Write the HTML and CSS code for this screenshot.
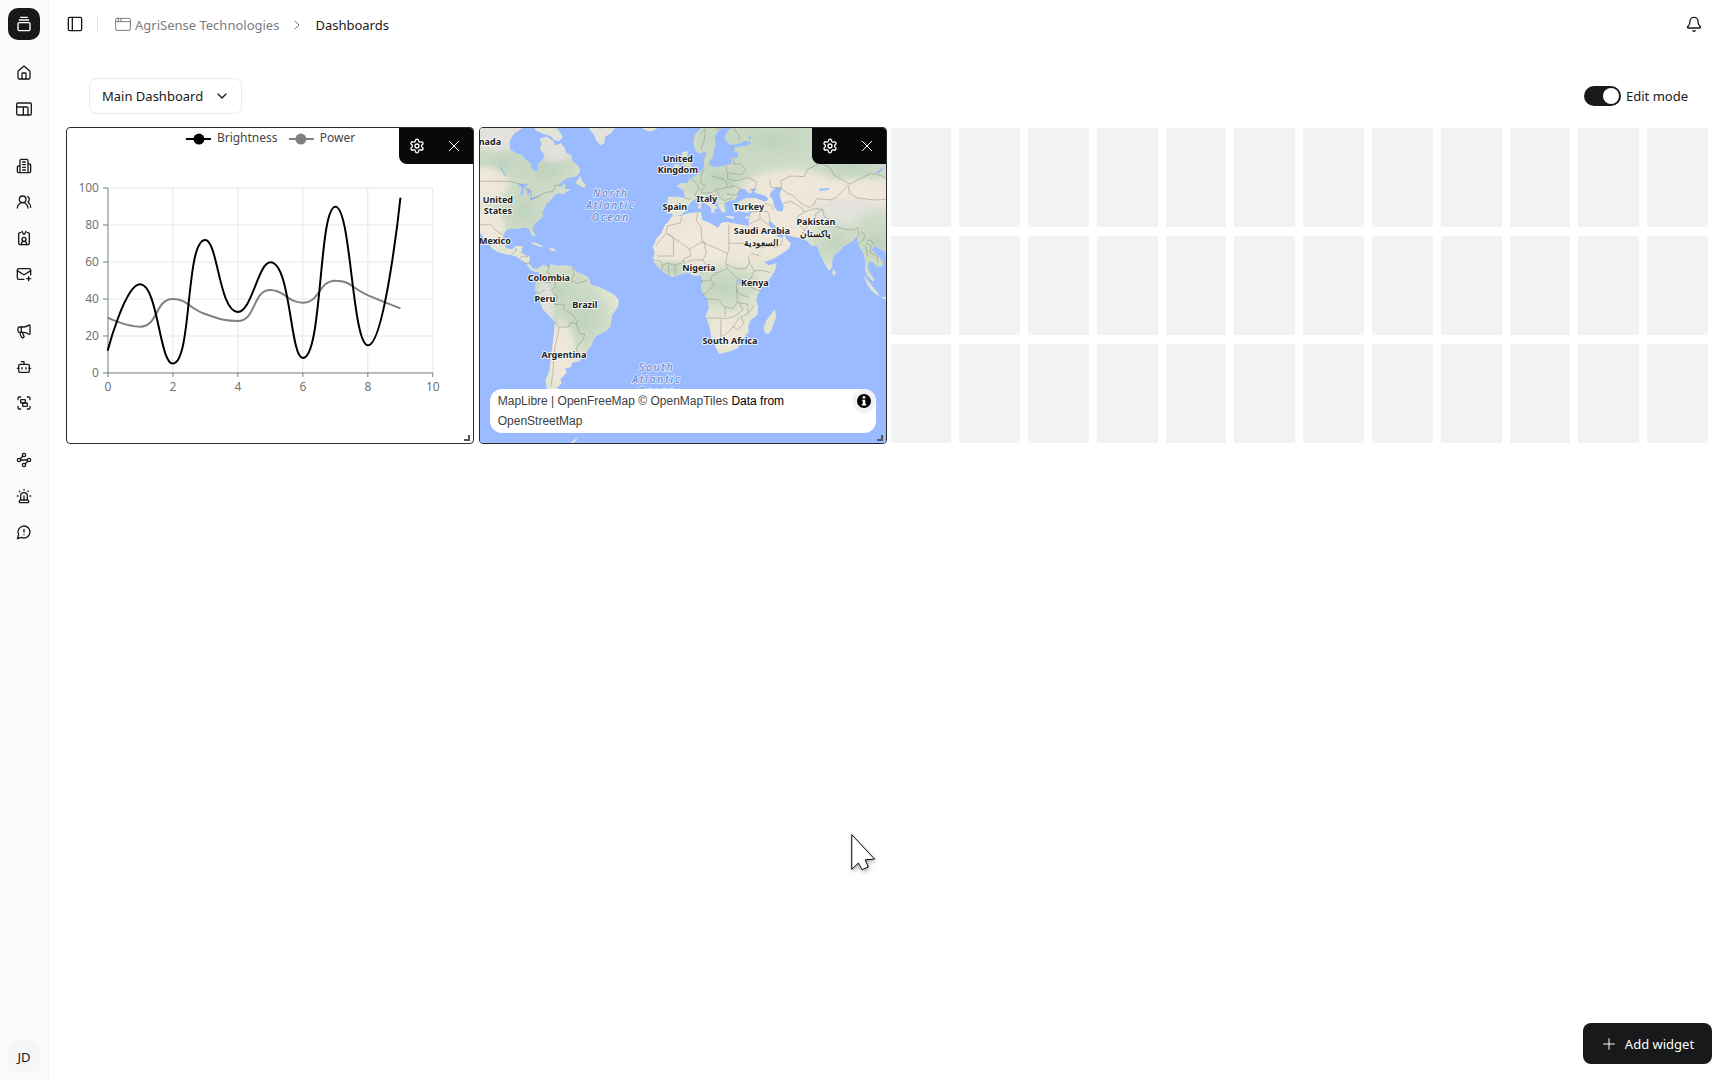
FILE: index.html
```html
<!DOCTYPE html>
<html lang="en">
<head>
<meta charset="utf-8">
<meta name="viewport" content="width=device-width, initial-scale=1">
<title>Dashboards - AgriSense Technologies</title>
<link rel="stylesheet" href="styles.css">
</head>
<body>
<div class="app">
  <aside class="sidebar">
    <a class="logo" href="#" aria-label="Workspace">
      <svg class="icon" viewBox="0 0 24 24"><path d="M7 2h10M5 6h14"/><rect x="3" y="10" width="18" height="12" rx="2"/></svg>
    </a>
    <nav class="nav" aria-label="Main">
      <div class="nav-group">
        <a class="nav-item" href="#" aria-label="Home"><svg class="icon" viewBox="0 0 24 24"><path d="M15 21v-8a1 1 0 0 0-1-1h-4a1 1 0 0 0-1 1v8"/><path d="M3 10a2 2 0 0 1 .7-1.5l7-6a2 2 0 0 1 2.6 0l7 6A2 2 0 0 1 21 10v9a2 2 0 0 1-2 2H5a2 2 0 0 1-2-2z"/></svg></a>
        <a class="nav-item" href="#" aria-label="Dashboards"><svg class="icon" viewBox="0 0 24 24"><rect x="1" y="3" width="22" height="18" rx="2"/><path d="M1 9h15a2 2 0 0 1 2 2v10M11 9v12"/></svg></a>
      </div>
      <div class="nav-group">
        <a class="nav-item" href="#" aria-label="Organizations"><svg class="icon" viewBox="0 0 24 24"><path d="M6 22V4a2 2 0 0 1 2-2h8a2 2 0 0 1 2 2v18zM6 12H4a2 2 0 0 0-2 2v6a2 2 0 0 0 2 2h2M18 9h2a2 2 0 0 1 2 2v9a2 2 0 0 1-2 2h-2M10 6h4M10 10h4M10 14h4M10 18h4"/></svg></a>
        <a class="nav-item" href="#" aria-label="Users"><svg class="icon" viewBox="0 0 24 24"><path d="M18 21a8 8 0 0 0-16 0"/><circle cx="10" cy="8" r="5"/><path d="M22 20c0-3.4-2-6.500-4-8a5 5 0 0 0-.45-8.300"/></svg></a>
        <a class="nav-item" href="#" aria-label="Badges"><svg class="icon" viewBox="0 0 24 24"><path d="M15 2l-2 4h-2L9 2M16 22v-1a4 4 0 0 0-8 0v1"/><circle cx="12" cy="14" r="3"/><path d="M7 4H6a2 2 0 0 0-2 2v14a2 2 0 0 0 2 2h12a2 2 0 0 0 2-2V6a2 2 0 0 0-2-2h-1"/></svg></a>
        <a class="nav-item" href="#" aria-label="Invitations"><svg class="icon" viewBox="0 0 24 24"><path d="M22 13V6a2 2 0 0 0-2-2H4a2 2 0 0 0-2 2v12a2 2 0 0 0 2 2h8"/><path d="m22 7-9 5.700a2 2 0 0 1-2 0L2 7M19 16v6M16 19h6"/></svg></a>
      </div>
      <div class="nav-group">
        <a class="nav-item" href="#" aria-label="Announcements"><svg class="icon" viewBox="0 0 24 24"><path d="M11 6a13 13 0 0 0 8.400-2.800A1 1 0 0 1 21 4v12a1 1 0 0 1-1.600.8A13 13 0 0 0 11 14H5a2 2 0 0 1-2-2V8a2 2 0 0 1 2-2z"/><path d="M6 14a12 12 0 0 0 2.400 7.200 2 2 0 0 0 3.200-2.400A8 8 0 0 1 10 14M8 6v8"/></svg></a>
        <a class="nav-item" href="#" aria-label="Bots"><svg class="icon" viewBox="0 0 24 24"><path d="M12 8V4H8"/><rect x="4" y="8" width="16" height="12" rx="2"/><path d="M2 14h2M20 14h2M15 13v2M9 13v2"/></svg></a>
        <a class="nav-item" href="#" aria-label="Groups"><svg class="icon" viewBox="0 0 24 24"><path d="M3 7V5a2 2 0 0 1 2-2h2M17 3h2a2 2 0 0 1 2 2v2M21 17v2a2 2 0 0 1-2 2h-2M7 21H5a2 2 0 0 1-2-2v-2"/><rect x="7" y="7" width="7" height="5" rx="1"/><rect x="10" y="12" width="7" height="5" rx="1"/></svg></a>
      </div>
      <div class="nav-group">
        <a class="nav-item" href="#" aria-label="Workflows"><svg class="icon" viewBox="0 0 24 24"><circle cx="12" cy="4.500" r="2.500"/><path d="m10.200 6.300-3.900 3.900"/><circle cx="4.500" cy="12" r="2.500"/><path d="M7 12h10"/><circle cx="19.500" cy="12" r="2.500"/><path d="m13.800 17.700 3.900-3.900"/><circle cx="12" cy="19.500" r="2.500"/></svg></a>
        <a class="nav-item" href="#" aria-label="Alarms"><svg class="icon" viewBox="0 0 24 24"><path d="M7 18v-6a5 5 0 1 1 10 0v6M5 21a1 1 0 0 0 1 1h12a1 1 0 0 0 1-1v-1a2 2 0 0 0-2-2H7a2 2 0 0 0-2 2zM21 12h1M18.500 4.500 18 5M2 12h1M12 2v1M4.900 4.900l.7.7M12 12v6"/></svg></a>
        <a class="nav-item" href="#" aria-label="Feedback"><svg class="icon" viewBox="0 0 24 24"><path d="M7.900 20A9 9 0 1 0 4 16.100L2 22zM12 8v4M12 16h.01"/></svg></a>
      </div>
    </nav>
    <button class="avatar" type="button" aria-label="Account">JD</button>
  </aside>

  <div class="page">
    <header class="topbar">
      <button class="icon-button" type="button" aria-label="Toggle sidebar"><svg class="icon" viewBox="0 0 24 24"><rect x="2" y="2" width="20" height="20" rx="2"/><path d="M8 2v20"/></svg></button>
      <span class="divider"></span>
      <nav class="crumbs" aria-label="Breadcrumb">
        <a class="crumb" href="#"><svg class="icon icon-thin" viewBox="0 0 24 24"><rect x="1" y="2" width="22" height="18" rx="2"/><path d="M1 7h22M5 2v5M9 2v5"/></svg>AgriSense Technologies</a>
        <svg class="icon icon-small crumb-arrow" viewBox="0 0 24 24"><path d="m8 4 8 8-8 8"/></svg>
        <span class="crumb-current">Dashboards</span>
      </nav>
      <button class="icon-button push" type="button" aria-label="Notifications"><svg class="icon" viewBox="0 0 24 24"><path d="M10.300 22a2 2 0 0 0 3.400 0M3.300 15.300A1 1 0 0 0 4 18h16a1 1 0 0 0 .7-2.700C19.400 14 18 12.500 18 8A6 6 0 0 0 6 8c0 4.500-1.400 6-2.700 7.300"/></svg></button>
    </header>

    <main class="content">
      <div class="toolbar">
        <div class="picker">
          <select class="picker-select" aria-label="Dashboard"><option>Main Dashboard</option></select>
          <svg class="icon picker-arrow" viewBox="0 0 24 24"><path d="m6 9 6 6 6-6"/></svg>
        </div>
        <label class="switch"><input class="switch-input" type="checkbox" role="switch" checked>Edit mode</label>
      </div>

      <div class="board" id="board">
        <section class="widget widget-chart" aria-label="Brightness and power">
          <svg class="fill" viewBox="1 1 406 315">
            <g class="grid-lines"><path d="M107 61v185M172 61v185M237 61v185M302 61v185M367 61v185M42 61h325M42 98h325M42 135h325M42 172h325M42 209h325"/></g>
            <g class="axis"><path d="M42 61v189M37 246h330M37 61h5M37 98h5M37 135h5M37 172h5M37 209h5M107 246v4M172 246v4M237 246v4M302 246v4M367 246v4"/></g>
            <g class="axis-text end"><text x="33" y="65">100</text><text x="33" y="102">80</text><text x="33" y="139">60</text><text x="33" y="176">40</text><text x="33" y="213">20</text><text x="33" y="250">0</text></g>
            <g class="axis-text middle"><text x="42" y="264">0</text><text x="107" y="264">2</text><text x="172" y="264">4</text><text x="237" y="264">6</text><text x="302" y="264">8</text><text x="367" y="264">10</text></g>
            <g class="series" transform="translate(-6 -7) scale(.33333)">
              <path class="power" d="M143 593C143 593 197.600 620 240.700 620C295.300 620 285.300 537 338.400 537C383 537 385.400 564.900 436 582C483 598 492 603 533.800 603C590 603 576.500 510 631.500 510C674 510 683 548 729 548C781 548 775.700 482 827 482C873.400 482 875.300 505 924.600 526C973 546.500 1022 565 1022 565"/>
              <path class="brightness" d="M143 692C143 692 195.500 493 240.700 493C293.200 493 299.200 731 338.400 731C397 731 375.700 360 436 360C473.400 360 478 576 533.800 576C575.700 576 595.300 427 631.500 427C693 427 690.600 714 729 714C788.300 714 776 260 827 260C873.700 260 877 676 924.600 676C975 676 1022 233 1022 233"/>
            </g>
            <g class="legend">
              <path class="brightness" d="M120 12h25"/><circle cx="133" cy="12" r="5.500"/><text x="151" y="15">Brightness</text>
              <path class="power" d="M223 12h25"/><circle class="power-dot" cx="235" cy="12" r="5.500"/><text x="254" y="15">Power</text>
            </g>
          </svg>
          <div class="widget-tools">
            <button class="tool" type="button" aria-label="Configure chart"><svg class="icon" viewBox="0 0 24 24"><use href="#gear"/></svg></button>
            <button class="tool" type="button" aria-label="Remove chart"><svg class="icon icon-thin" viewBox="0 0 24 24"><path d="M19 5 5 19M5 5l14 14"/></svg></button>
          </div>
          <span class="grip"></span>
        </section>

        <section class="widget widget-map" aria-label="Map">
          <svg class="fill" viewBox="1 1 406 315" preserveAspectRatio="xMidYMid slice">
            <defs>
              <symbol id="gear" viewBox="0 0 24 24"><path d="M9.700 4.100a2.300 2.300 0 0 1 4.600 0 2.300 2.300 0 0 0 3.300 1.900 2.300 2.300 0 0 1 2.300 4 2.300 2.300 0 0 0 0 3.900 2.300 2.300 0 0 1-2.300 4 2.300 2.300 0 0 0-3.300 2 2.300 2.300 0 0 1-4.600 0 2.300 2.300 0 0 0-3.300-2 2.300 2.300 0 0 1-2.300-4 2.300 2.300 0 0 0 0-3.900 2.300 2.300 0 0 1 2.300-4 2.300 2.300 0 0 0 3.300-1.900"/><circle cx="12" cy="12" r="3"/></symbol>
              <radialGradient id="forest"><stop offset="0" stop-color="#bfd3be"/><stop offset=".6" stop-color="#c8d8c3" stop-opacity=".75"/><stop offset="1" stop-color="#d0dcc8" stop-opacity="0"/></radialGradient>
              <radialGradient id="sand"><stop offset="0" stop-color="#f1e8dd"/><stop offset=".7" stop-color="#efe7d9" stop-opacity=".85"/><stop offset="1" stop-color="#ece6d4" stop-opacity="0"/></radialGradient>
              <radialGradient id="snow"><stop offset="0" stop-color="#e3e2de"/><stop offset=".7" stop-color="#e2e1dc" stop-opacity=".8"/><stop offset="1" stop-color="#e2e1dc" stop-opacity="0"/></radialGradient>
              <clipPath id="land">
                <path d="M20 15H165L150 28 128 42 117 62 118 88 134 100 152 104 162 118 178 128 182 146 194 157 203 148 203 132 216 118 222 104 208 88 212 70 206 56 228 50 246 62 254 78 270 70 280 82 286 100 302 106 304 124 322 138 328 152 318 168 290 174 272 186 262 196 274 202 276 190 284 196 280 208 300 208 276 222 264 218 250 226 238 242 226 252 222 264 214 276 216 290 200 304 188 316 184 328 192 342 190 350 182 344 176 328 162 322 142 326 122 326 106 330 97 344 97 366 106 384 124 388 134 378 156 378 150 398 162 404 178 410 174 430 184 444 200 448 208 440 206 456 192 456 178 448 166 430 150 420 134 408 110 404 80 396 62 384 48 364 32 344 20 328Z"/>
                <path d="M182 15 196 32 218 42 240 48 250 60 266 62 276 50 262 30 250 15ZM350 15 360 34 370 44 376 62 390 76 400 70 402 50 420 40 434 22 440 15ZM510 15 520 30 540 35 558 26 566 15ZM313 188 322 178 328 166 334 182 344 194 340 204 324 196ZM180 366 200 370 218 380 206 380 186 372ZM234 386 246 384 258 392 242 394Z"/>
                <path d="M208 440 222 434 232 444 240 432 262 438 286 436 304 440 316 456 340 464 352 472 360 494 380 500 400 508 430 524 444 540 442 560 424 584 418 620 404 634 376 648 366 662 362 676 346 696 336 706 326 724 304 728 298 742 280 746 288 756 276 770 268 778 272 790 260 802 262 822 270 850 280 866 258 858 240 840 230 820 224 780 236 750 240 720 244 680 250 640 252 606 236 588 216 568 204 536 192 514 194 492 206 476 204 452Z"/>
                <path d="M592 230 622 230 642 234 640 212 618 198 630 190 648 190 656 178 676 166 690 156 700 142 700 118 710 102 720 116 712 130 724 142 744 140 766 136 782 132 786 112 800 116 802 98 788 92 790 82 830 78 844 66 824 62 808 70 780 74 766 64 762 50 772 34 784 22 800 15H1260V410L1238 392 1222 384 1210 378 1202 390 1216 404 1236 424 1234 438 1218 440 1206 426 1194 424 1190 442 1200 464 1212 480 1206 484 1190 468 1182 450 1184 424 1178 400 1168 384 1160 366 1158 352 1146 362 1134 370 1120 378 1104 394 1090 406 1084 420 1084 442 1074 452 1064 436 1052 412 1042 388 1036 376 1022 378 1012 366 1000 356 976 352 950 346 930 336 912 316 896 300 892 308 906 334 920 350 934 354 940 344 948 360 960 370 954 386 934 400 908 416 880 426 874 412 862 390 850 366 840 346 834 322 834 302 838 286 842 274 826 278 808 274 792 276 786 258 800 246 826 234 852 234 884 246 894 236 882 226 860 220 848 216 862 206 850 208 840 204 844 216 834 220 822 206 810 206 802 216 798 230 790 240 776 242 760 248 762 262 764 278 754 276 744 262 738 244 724 232 710 224 706 234 718 248 738 260 740 268 730 266 730 280 720 276 722 264 700 248 690 236 672 238 658 248 650 262 642 276 630 284 612 288 600 280 588 280 588 256Z"/>
                <path d="M668 68 672 44 688 28 700 15H764L742 32 730 50 734 72 728 92 726 112 714 124 708 116 704 94 688 100 674 92ZM634 96 652 94 648 112 662 122 660 136 670 146 662 156 636 164 644 148 636 136 644 124 634 112ZM608 134 624 132 628 148 610 158ZM684 242 692 242 690 266 682 264ZM766 288 790 290 788 296 768 292ZM820 292 836 288 830 296Z"/>
                <path d="M606 286 630 288 652 280 690 276 694 300 718 310 742 324 750 310 766 306 798 312 832 318 840 340 852 362 856 382 868 404 884 428 892 436 918 430 912 452 896 478 874 502 860 524 856 542 862 558 860 584 838 602 832 620 834 636 820 650 816 666 798 686 770 696 744 702 738 688 722 654 716 620 704 590 714 562 710 536 694 516 690 500 696 484 690 468 670 468 652 458 630 462 604 472 586 462 560 442 546 420 552 396 546 380 558 354 572 340 582 316 594 304Z"/>
                <path d="M912 568 916 590 904 624 896 640 884 642 878 624 886 602 898 586ZM1086 446 1096 458 1090 468 1084 460ZM1178 466 1190 480 1206 500 1224 522 1222 528 1204 514 1190 496ZM1228 530 1246 532 1246 540ZM296 972 306 962 322 952 312 966Z"/>
              </clipPath>
            </defs>
            <rect class="ocean" width="408" height="317"/>
            <g transform="translate(-8 -7) scale(.33333)">
              <g clip-path="url(#land)">
                <rect class="terrain" width="1260" height="1000"/>
                <ellipse cx="110" cy="130" rx="180" ry="80" fill="url(#forest)"/>
                <ellipse cx="230" cy="150" rx="130" ry="100" fill="url(#forest)"/>
                <ellipse cx="160" cy="270" rx="120" ry="110" fill="url(#forest)"/>
                <ellipse cx="80" cy="50" rx="110" ry="50" fill="url(#snow)"/>
                <ellipse cx="250" cy="85" rx="60" ry="50" fill="url(#snow)"/>
                <ellipse cx="35" cy="190" rx="90" ry="60" fill="url(#sand)"/>
                <ellipse cx="50" cy="320" rx="60" ry="60" fill="url(#sand)"/>
                <ellipse cx="390" cy="40" rx="60" ry="60" fill="url(#snow)"/>
                <ellipse cx="270" cy="520" rx="150" ry="120" fill="url(#forest)"/>
                <ellipse cx="340" cy="600" rx="110" ry="120" fill="url(#forest)"/>
                <ellipse cx="270" cy="700" rx="50" ry="110" fill="url(#sand)"/>
                <ellipse cx="224" cy="560" rx="30" ry="90" fill="url(#snow)"/>
                <ellipse cx="725" cy="60" rx="90" ry="100" fill="url(#forest)"/>
                <ellipse cx="750" cy="170" rx="180" ry="110" fill="url(#forest)"/>
                <ellipse cx="900" cy="60" rx="280" ry="120" fill="url(#forest)"/>
                <ellipse cx="1140" cy="140" rx="180" ry="80" fill="url(#forest)"/>
                <ellipse cx="960" cy="210" rx="180" ry="70" fill="url(#sand)"/>
                <ellipse cx="1160" cy="225" rx="180" ry="60" fill="url(#sand)"/>
                <ellipse cx="930" cy="310" rx="130" ry="130" fill="url(#sand)"/>
                <ellipse cx="710" cy="365" rx="220" ry="115" fill="url(#sand)"/>
                <ellipse cx="1130" cy="285" rx="120" ry="60" fill="url(#snow)"/>
                <ellipse cx="1090" cy="370" rx="100" ry="80" fill="url(#forest)"/>
                <ellipse cx="1220" cy="370" rx="110" ry="130" fill="url(#forest)"/>
                <ellipse cx="755" cy="500" rx="140" ry="85" fill="url(#forest)"/>
                <ellipse cx="600" cy="450" rx="100" ry="35" fill="url(#forest)"/>
                <ellipse cx="770" cy="640" rx="70" ry="60" fill="url(#sand)"/>
              </g>
              <path class="water" d="M904 212 916 202 932 206 926 222 930 240 938 256 936 274 920 274 908 256 906 240 896 226ZM1046 206l30-2-2 5-28 4ZM88 134l10 20 8 14-6-2-10-18ZM138 196l22-6 14 6-14 4-4 26-8-2 4-22ZM166 200l14 14-6 14-6-10ZM176 236l24-8 12-6-10 10-24 10ZM802 480l14-4 2 14-14 2ZM810 70l14-8-4 14ZM834 46l8 8-8 6ZM1212 160l22-16 12-8-20 22Z"/>
              <path class="borders" d="M24 184H116L150 192 164 204 182 214 180 238 214 224 222 218 246 214 254 196 268 196M24 312 42 316 58 312 76 332 94 344M120 404 134 394 136 384M146 414 160 408 172 410M158 430 176 430M236 438 228 458 250 470 254 500 240 510 260 530 252 554 278 552 280 568 304 582 320 604 316 612 328 640 342 644 336 660 320 676 316 690 330 704M250 602 264 622 294 620 300 606 318 612M264 624 260 650 252 680 248 720 246 760 240 800M304 442 310 466 300 480 316 490 334 486 350 480M206 476 222 486 240 488M192 514 206 520 222 508"/>
              <path class="borders" d="M640 234 660 238M660 176 676 190 684 206 672 224 680 238M700 146 690 170 690 190 704 196 690 214 694 220 720 218 738 208 764 204 770 192 760 178 722 168M764 136 770 158 770 178M786 132 810 132 826 152 810 164 772 158M788 112 790 132M770 178 800 182 830 172 858 186 850 208 834 212M764 204 792 198 810 206 796 226 766 222M738 210 744 228 760 242 786 234M722 222 744 238M772 186 788 200M790 92 786 78M688 40 704 28 700 60 690 90M734 30 754 21M786 21 806 48 804 64"/>
              <path class="borders" d="M896 178 900 202 932 204 930 182 960 168 1000 170 1010 148 1046 130 1076 142 1090 166 1120 182 1136 192 1160 180 1200 160 1230 166 1246 176M928 204 946 218 968 228 996 254 1016 262 1030 254 1036 236 1080 240 1096 232 1122 206 1132 196 1136 220 1160 234 1210 240 1246 238M938 250 960 244 990 262 1000 276 978 292 984 314 1000 330 990 350M1000 276 1030 266 1056 268 1060 290 1080 300 1094 318 1120 328 1150 330 1160 322 1164 346 1150 360M1056 268 1036 280 1030 300 1014 312 1000 332M880 250 900 256 908 268M838 276 866 274 890 274 898 300M866 276 868 296 850 304 836 312M868 296 900 320M852 380 866 384 900 376 912 384 930 376 936 356M1160 370 1178 360 1182 344 1170 334M1184 370 1202 378 1196 396 1220 410 1220 426M1184 376 1190 410M1210 376 1200 360 1190 362"/>
              <path class="borders" d="M632 290 630 308 590 318 586 340 554 378M586 340 608 354 608 408 560 408M590 340 656 388 682 372 700 364M682 276 676 300 690 320 694 366 770 400 774 392 774 314M774 370H850M546 420 566 422 576 436 592 428 606 436 630 430 640 416 660 408 656 388M576 436 572 450M592 430 594 468M612 436 614 464M640 420 646 456M700 366 706 400 696 420 670 420 650 424M696 420 706 434 690 460M770 400 764 430 770 446 740 458 706 450M766 432 796 446 826 446 836 426 832 412 844 400 866 408M836 428 850 452 878 452 898 458M770 446 796 474 820 482 840 476 850 452M690 484 720 480 724 466 740 462M720 480 730 494 706 520 690 524M800 478 796 500 802 520 834 532M830 480 836 500 870 514M706 536 746 540 760 560 786 566 798 548 830 552 832 580 810 592M800 548 796 500M704 594H750L764 596 790 590 816 570 804 546M750 596 750 640 756 650 788 620 800 630 820 610 808 590M750 640 748 660M764 560 762 590M786 622 804 594M814 652 808 666M832 580 850 556"/>
            </g>
            <g class="place">
              <text x="11" y="18">nada</text><text x="19" y="76">United</text><text x="19" y="87">States</text><text x="16" y="117">Mexico</text><text x="70" y="154">Colombia</text><text x="66" y="175">Peru</text><text x="106" y="181">Brazil</text><text x="85" y="231">Argentina</text>
              <text x="199" y="35">United</text><text x="199" y="46">Kingdom</text><text x="196" y="83">Spain</text><text x="228" y="75">Italy</text><text x="270" y="83">Turkey</text><text x="283" y="107">Saudi Arabia</text><text x="283" y="119">السعودية</text><text x="337" y="98">Pakistan</text><text x="337" y="110">پاکستان</text><text x="220" y="144">Nigeria</text><text x="276" y="159">Kenya</text><text x="251" y="217">South Africa</text>
            </g>
            <g class="sea"><text x="132" y="70">North</text><text x="132" y="82">Atlantic</text><text x="132" y="94">Ocean</text><text x="178" y="244">South</text><text x="178" y="256">Atlantic</text><text x="178" y="268">Ocean</text></g>
          </svg>
          <div class="credit">
            <p class="credit-text"><a href="#">MapLibre</a> | <a href="#">OpenFreeMap</a> <a href="#">© OpenMapTiles</a> <span class="credit-strong">Data from</span> <a href="#">OpenStreetMap</a></p>
            <button class="info" type="button" aria-label="Toggle attribution"><svg class="info-icon" viewBox="0 0 16 16"><circle cx="8" cy="8" r="8"/><path d="M6.500 2.500h3v2.500h-3zM6 6.500h3.500v5h1v1.500h-5v-1.500h1V8H6z"/></svg></button>
          </div>
          <div class="widget-tools">
            <button class="tool" type="button" aria-label="Configure map"><svg class="icon" viewBox="0 0 24 24"><use href="#gear"/></svg></button>
            <button class="tool" type="button" aria-label="Remove map"><svg class="icon icon-thin" viewBox="0 0 24 24"><path d="M19 5 5 19M5 5l14 14"/></svg></button>
          </div>
          <span class="grip"></span>
        </section>
      </div>
    </main>
  </div>

  <button class="add" type="button"><svg class="icon icon-thin" viewBox="0 0 24 24"><path d="M4 12h16M12 4v16"/></svg>Add widget</button>
  <svg class="cursor" viewBox="0 0 78 112"><path d="M2 2V107L22 88 33 108 52 100 43 78 71 76Z"/></svg>
</div>
<script src="board.js"></script>
</body>
</html>
```
FILE: board.js
```js
// Fill the free part of the 24 x 3 board with empty drop cells.
const board = document.getElementById("board");
for (let row = 0; row < 3; row++) {
  for (let column = 12; column < 24; column++) {
    const cell = document.createElement("div");
    cell.className = "cell";
    board.append(cell);
  }
}
```
FILE: styles.css
```css
* {
  box-sizing: border-box;
}

body {
  margin: 0;
  background: #fff;
  color: #18191b;
  font: 13px/20px "Noto Sans", "Open Sans", sans-serif;
}

button,
select {
  font: inherit;
  color: inherit;
}

button {
  display: flex;
  align-items: center;
  justify-content: center;
  padding: 0;
  border: 0;
  background: none;
}

a {
  color: inherit;
  text-decoration: none;
}

.app {
  display: flex;
  min-height: 100vh;
}

.icon {
  flex: none;
  width: 16px;
  height: 16px;
  fill: none;
  stroke: currentColor;
  stroke-width: 2;
  stroke-linecap: round;
  stroke-linejoin: round;
}

.icon-thin {
  stroke-width: 1.5;
}

.icon-small {
  width: 12px;
  height: 12px;
}

/* Sidebar */
.sidebar {
  display: flex;
  flex-direction: column;
  align-items: center;
  flex: none;
  width: 49px;
  padding: 8px 8px 7px;
  border-right: 1px solid #f1f2f2;
  background: #fbfbfa;
}

.logo {
  display: flex;
  align-items: center;
  justify-content: center;
  width: 32px;
  height: 32px;
  border-radius: 10px;
  background: #18191b;
  color: #fff;
}

.nav {
  display: flex;
  flex-direction: column;
  gap: 25px;
  margin-top: 17px;
}

.nav-group {
  display: flex;
  flex-direction: column;
  gap: 4px;
}

.nav-item {
  display: flex;
  align-items: center;
  justify-content: center;
  width: 32px;
  height: 32px;
}

.avatar {
  width: 32px;
  height: 32px;
  margin-top: auto;
  border-radius: 8px;
  background: #f4f6f7;
}

/* Page header */
.page {
  flex: 1;
  min-width: 0;
}

.topbar {
  display: flex;
  align-items: center;
  height: 48px;
  padding: 0 20px 0 12px;
}

.icon-button {
  width: 28px;
  height: 28px;
}

.push {
  margin-left: auto;
}

.divider {
  width: 1px;
  height: 16px;
  margin: 0 17px 0 8px;
  background: #e4e5e6;
}

.crumbs,
.crumb {
  display: flex;
  align-items: center;
}

.crumbs {
  gap: 12px;
  padding-top: 2px;
}

.crumb {
  gap: 4px;
  color: #7b7c7e;
}

.crumb-arrow {
  color: #6b6c6e;
}

/* Board toolbar */
.toolbar {
  display: flex;
  align-items: center;
  justify-content: space-between;
  padding: 30px 40px 14px;
}

.picker {
  position: relative;
}

.picker-select {
  width: 153px;
  height: 36px;
  padding: 0 12px;
  border: 1px solid #e9eaeb;
  border-radius: 8px;
  background: #fff;
  appearance: none;
}

.picker-arrow {
  position: absolute;
  top: 10px;
  right: 12px;
  pointer-events: none;
}

.switch {
  display: flex;
  align-items: center;
  gap: 5px;
}

.switch-input {
  display: flex;
  align-items: center;
  justify-content: flex-end;
  width: 37px;
  height: 20px;
  margin: 0;
  padding: 2px;
  border-radius: 10px;
  background: #18191b;
  appearance: none;
}

.switch-input::before {
  content: "";
  width: 16px;
  height: 16px;
  border-radius: 8px;
  background: #fff;
}

/* Board */
.board {
  display: grid;
  grid-template-columns: repeat(24, 1fr);
  grid-template-rows: repeat(3, 99px);
  gap: 9px 8px;
  padding: 0 20px 0 16px;
}

.cell {
  background: #f1f3f2;
}

.widget {
  position: relative;
  grid-row: 1 / span 3;
  margin: -1px -4px -1px 1px;
  border: 1px solid #2b2c2e;
  border-radius: 4px;
  overflow: hidden;
}

.widget-chart {
  grid-column: 1 / span 6;
}

.widget-map {
  grid-column: 7 / span 6;
}

.fill {
  display: block;
  width: 100%;
  height: 100%;
}

.widget-tools {
  position: absolute;
  top: 0;
  right: 0;
  display: flex;
  border-bottom-left-radius: 8px;
  background: #080a09;
  color: #fff;
}

.tool {
  width: 37px;
  height: 36px;
}

.grip {
  position: absolute;
  right: 3px;
  bottom: 2px;
  width: 6px;
  height: 6px;
  border: solid #555;
  border-width: 0 2px 2px 0;
}

/* Chart */
.grid-lines,
.axis,
.series,
.legend path {
  fill: none;
}

.grid-lines {
  stroke: #e4e8e8;
}

.axis {
  stroke: #77797c;
}

.axis-text,
.legend {
  font-size: 12px;
}

.axis-text {
  fill: #707276;
}

.end {
  text-anchor: end;
}

.middle {
  text-anchor: middle;
}

.brightness,
.power {
  stroke-width: 2;
}

.series path {
  stroke-width: 6;
}

.brightness {
  stroke: #000;
}

.power {
  stroke: #808080;
}

.power-dot {
  fill: #808080;
}

.legend text {
  fill: #444;
}

/* Map */
.ocean,
.water {
  fill: #9abbff;
}

.terrain {
  fill: #e2e5d2;
}

.borders {
  fill: none;
  stroke: #8d8f83;
  stroke-opacity: .75;
  stroke-width: 2;
  stroke-linejoin: round;
}

.place,
.sea {
  text-anchor: middle;
  paint-order: stroke;
  stroke-linejoin: round;
}

.place {
  fill: #222;
  stroke: rgb(255 255 255 / .75);
  stroke-width: 2;
  font-size: 9px;
  font-weight: 700;
}

.sea {
  fill: #6084c0;
  stroke: rgb(255 255 255 / .6);
  stroke-width: 2;
  font-size: 10px;
  font-style: italic;
  letter-spacing: 2px;
}

.credit {
  position: absolute;
  right: 10px;
  bottom: 10px;
  left: 10px;
  display: flex;
  align-items: flex-start;
  border-radius: 12px;
  background: #fff;
}

.credit-text {
  flex: 1;
  margin: 0;
  padding: 2px 60px 2px 8px;
  color: #404040;
  font: 12px/20px "Liberation Sans", Arial, sans-serif;
}

.credit-strong {
  color: #000;
}

.info {
  width: 24px;
  height: 24px;
  border-radius: 12px;
  background: #f2f2f2;
}

.info-icon {
  width: 14px;
  height: 14px;
}

.info-icon path {
  fill: #fff;
}

/* Floating layer */
.add {
  position: fixed;
  right: 16px;
  bottom: 16px;
  gap: 8px;
  width: 129px;
  height: 41px;
  border-radius: 8px;
  background: #18191b;
  color: #fff;
}

.cursor {
  position: fixed;
  top: 834px;
  left: 851px;
  width: 26px;
  height: 37px;
  fill: #fff;
  stroke: #000;
  stroke-width: 3;
  filter: drop-shadow(1px 2px 2px rgb(0 0 0 / .3));
}
```
